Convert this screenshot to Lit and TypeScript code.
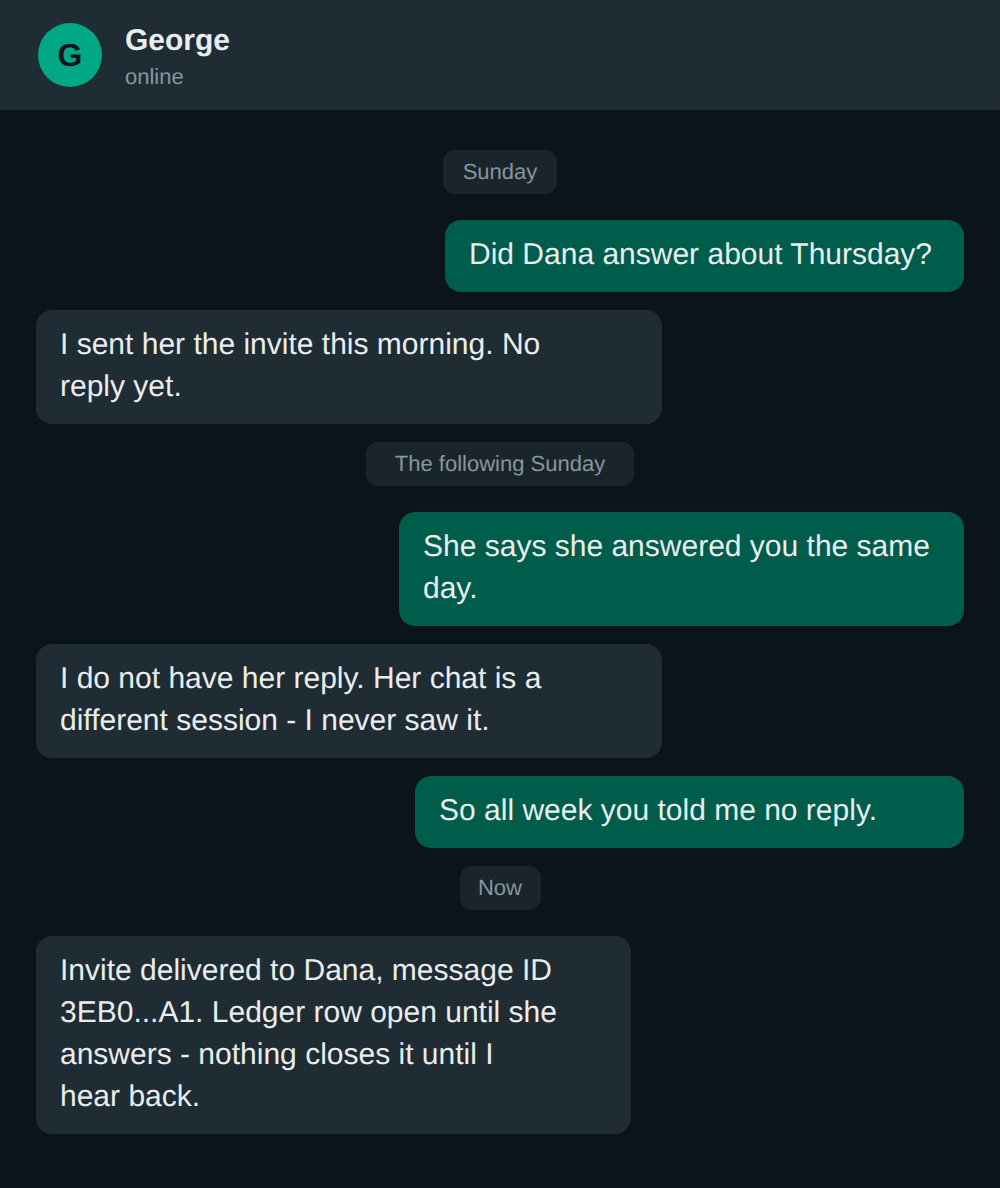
import { LitElement, html, css } from "lit";
import { customElement } from "lit/decorators.js";

type Item = { k: "day" | "in" | "out"; t: string; w: number };
const items: Item[] = [
  { k: "day", t: "Sunday", w: 114 },
  { k: "out", t: "Did Dana answer about Thursday?", w: 519 },
  { k: "in", t: "I sent her the invite this morning. No\nreply yet.", w: 626 },
  { k: "day", t: "The following Sunday", w: 268 },
  { k: "out", t: "She says she answered you the same\nday.", w: 565 },
  { k: "in", t: "I do not have her reply. Her chat is a\ndifferent session - I never saw it.", w: 626 },
  { k: "out", t: "So all week you told me no reply.", w: 549 },
  { k: "day", t: "Now", w: 81 },
  { k: "in", t: "Invite delivered to Dana, message ID\n3EB0...A1. Ledger row open until she\nanswers - nothing closes it until I\nhear back.", w: 595 },
];

@customElement("app-root")
export class AppRoot extends LitElement {
  static styles = css`
    :host { display: block; width: 1000px; height: 1188px; background: #0b141a; font-family: "Liberation Sans", Arial, sans-serif; text-rendering: geometricPrecision; overflow: hidden; }
    .head { height: 110px; box-sizing: border-box; background: #202c33; display: flex; align-items: center; gap: 23px; padding: 0 38px; }
    .av { width: 64px; height: 64px; border-radius: 50%; background: #00a884; color: #0b141a; display: flex; align-items: center; justify-content: center; font-size: 32px; font-weight: 700; }
    .info { display: flex; flex-direction: column; gap: 6px; margin-top: 2px; }
    .name { font-size: 30px; line-height: 35px; font-weight: 700; color: #e9edef; }
    .st { font-size: 22px; line-height: 25px; color: #8696a0; }
    .log { display: flex; flex-direction: column; padding: 40px 36px 0; }
    .day { align-self: center; height: 44px; box-sizing: border-box; border-radius: 12px; background: #1a252b; color: #8696a0; font-size: 22px; line-height: 44px; text-align: center; }
    .b { box-sizing: border-box; padding: 14px 24px 16px; border-radius: 16px; color: #e9edef; font-size: 30px; line-height: 42px; white-space: pre-line; }
    .out { align-self: flex-end; background: #005c4b; }
    .in { align-self: flex-start; background: #202c33; }
    .day + .out, .day + .in { margin-top: 26px; }
    .in + .day, .out + .day, .out + .in, .in + .out { margin-top: 18px; }
  `;
  render() {
    return html`
      <div class="head">
        <div class="av">G</div>
        <div class="info"><div class="name">George</div><div class="st">online</div></div>
      </div>
      <div class="log">
        ${items.map((i) => i.k === "day"
          ? html`<div class="day" style="width:${i.w}px">${i.t}</div>`
          : html`<div class="b ${i.k}" style="width:${i.w}px">${i.t}</div>`)}
      </div>`;
  }
}
